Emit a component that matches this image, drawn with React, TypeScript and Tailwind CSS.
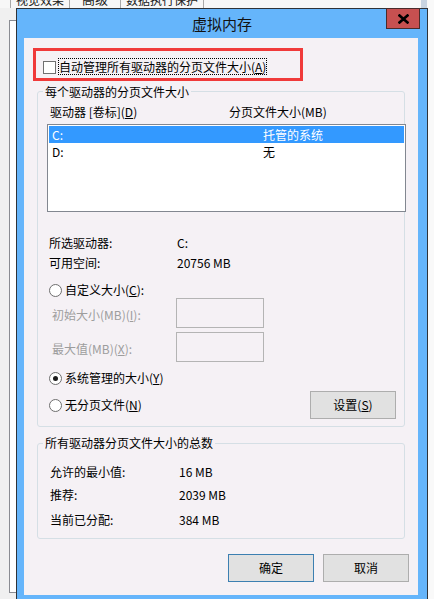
import React from "react";

function Radio({ checked }: { checked?: boolean }) {
  return (
    <span className="w-[13px] h-[13px] rounded-full border border-[#6e6e6e] bg-white flex items-center justify-center shrink-0">
      {checked && <span className="w-[5px] h-[5px] rounded-full bg-[#1c1c1c]" />}
    </span>
  );
}

function Btn({ children, primary }: { children: React.ReactNode; primary?: boolean }) {
  return (
    <div
      className={
        "w-[86px] h-[28px] flex items-center justify-center bg-[#e1e1e1] border " +
        (primary ? "border-[#3c7fb1]" : "border-[#adadad]")
      }
    >
      {children}
    </div>
  );
}

export default function App() {
  return (
    <div className="relative w-[434px] h-[599px] overflow-hidden bg-[#f0f0f0] text-[12px] leading-[16px] text-black font-['Noto_Sans_CJK_SC','Noto_Sans',sans-serif]">
      {/* backdrop: underlying window's tab strip */}
      <div className="absolute left-0 top-0 w-[434px] h-[8px] overflow-hidden bg-[#f7f7f7] flex">
        <div className="ml-[10px] flex h-[8px] border-l border-[#a9a9a9] text-[#222]">
          <div className="w-[59px] border-r border-[#a9a9a9] flex justify-center">
            <span className="mt-[-8px] leading-[16px]">视觉效果</span>
          </div>
          <div className="w-[51px] border-r border-[#a9a9a9] flex justify-center">
            <span className="mt-[-9px] leading-[16px] text-[13px]">高级</span>
          </div>
          <div className="w-[83px] border-r border-[#a9a9a9] flex justify-center">
            <span className="mt-[-8px] leading-[16px]">数据执行保护</span>
          </div>
        </div>
      </div>
      <div className="absolute left-[421px] top-0 w-[6px] h-[10px] bg-[#c8d4e2]" />
      <div className="absolute left-[428px] top-0 w-[6px] h-[599px] bg-[#f9f9f9]" />
      <div className="absolute left-[9px] top-[20px] w-[12px] h-[573px] border border-[#8a8c92] bg-white" />

      {/* dialog window */}
      <div className="absolute left-[16px] top-[8px] w-[412px] h-[595px] border border-[#2f3338] bg-[#65b5fb] flex flex-col">
        <div className="relative h-[29px] flex items-center justify-center shrink-0">
          <span className="text-[15px] leading-[20px] mt-[1px] text-[#111]">虚拟内存</span>
          <div className="absolute right-[7px] top-[-1px] w-[34px] h-[21px] bg-[#c75050] border border-[#4a2b2b] flex items-center justify-center">
            <svg width="11" height="10" viewBox="0 0 11 10">
              <path d="M1.5 1.5 L9.5 8.5 M9.5 1.5 L1.5 8.5" stroke="#000" strokeWidth="2.6" strokeLinecap="square" />
            </svg>
          </div>
        </div>

        <div className="ml-[7px] mr-[9px] h-[557px] bg-[#f5f1f5] flex flex-col shrink-0">
          {/* highlighted checkbox */}
          <div className="ml-[9px] mt-[10px] w-[270px] h-[33px] border-[3px] border-[#f03a3a] flex items-start pl-[7px] pt-[7px] shrink-0">
            <span className="mt-[3px] w-[13px] h-[13px] border border-[#707070] bg-white shrink-0" />
            <span className="ml-[2px] h-[17px] border border-dotted border-black leading-[15px] whitespace-nowrap">
              自动管理所有驱动器的分页文件大小(<u>A</u>)
            </span>
          </div>

          {/* group 1 */}
          <div className="relative ml-[13px] mt-[10px] w-[368px] h-[336px] border border-[#d5dfe5] rounded-[3px] shrink-0">
            <span className="absolute left-[5px] top-[-8px] px-[2px] bg-[#f5f1f5] whitespace-nowrap">每个驱动器的分页文件大小</span>

            <div className="pt-[12px] pl-[12px] flex whitespace-nowrap">
              <span className="w-[179px]">驱动器 [卷标](<u>D</u>)</span>
              <span>分页文件大小(MB)</span>
            </div>

            <div className="mt-[4px] ml-[9px] w-[359px] h-[88px] border border-[#828790] bg-white p-[1px]">
              <div className="h-[17px] flex items-center bg-[#3399ff] text-white pl-[3px]">
                <span className="w-[211px]">C:</span>
                <span>托管的系统</span>
              </div>
              <div className="h-[17px] flex items-center pl-[3px]">
                <span className="w-[211px]">D:</span>
                <span>无</span>
              </div>
            </div>

            <div className="mt-[21px] pl-[11px]">
              <div className="h-[20px] flex items-center">
                <span className="w-[128px]">所选驱动器:</span>
                <span>C:</span>
              </div>
              <div className="h-[20px] flex items-center">
                <span className="w-[128px]">可用空间:</span>
                <span>20756 MB</span>
              </div>
            </div>

            <div className="mt-[7px] h-[20px] pl-[11px] flex items-center gap-[3px]">
              <Radio />
              <span>自定义大小(<u>C</u>):</span>
            </div>

            <div className="mt-[-2px] h-[30px] pl-[14px] flex items-center text-[#9d9d9d]">
              <span className="w-[124px] mt-[4px]">初始大小(MB)(<u>I</u>):</span>
              <span className="w-[88px] h-[30px] border border-[#b4b4b4]" />
            </div>
            <div className="mt-[4px] h-[30px] pl-[14px] flex items-center text-[#9d9d9d]">
              <span className="w-[124px] mt-[4px]">最大值(MB)(<u>X</u>):</span>
              <span className="w-[88px] h-[30px] border border-[#b4b4b4]" />
            </div>

            <div className="mt-[6px] h-[20px] pl-[11px] flex items-center gap-[3px]">
              <Radio checked />
              <span>系统管理的大小(<u>Y</u>)</span>
            </div>

            <div className="mt-[3px] h-[28px] pl-[11px] flex items-center">
              <Radio />
              <span className="ml-[3px]">无分页文件(<u>N</u>)</span>
              <div className="ml-auto mr-[8px]">
                <Btn>
                  设置(<u>S</u>)
                </Btn>
              </div>
            </div>
          </div>

          {/* group 2 */}
          <div className="relative ml-[13px] mt-[16px] w-[368px] h-[96px] border border-[#d5dfe5] rounded-[3px] shrink-0">
            <span className="absolute left-[5px] top-[-9px] px-[2px] bg-[#f5f1f5] whitespace-nowrap">所有驱动器分页文件大小的总数</span>
            <div className="pt-[18px] pl-[12px]">
              <div className="h-[20px] flex items-center">
                <span className="w-[129px]">允许的最小值:</span>
                <span>16 MB</span>
              </div>
              <div className="mt-[3px] h-[20px] flex items-center">
                <span className="w-[129px]">推荐:</span>
                <span>2039 MB</span>
              </div>
              <div className="mt-[5px] h-[20px] flex items-center">
                <span className="w-[129px]">当前已分配:</span>
                <span>384 MB</span>
              </div>
            </div>
          </div>

          <div className="mt-[15px] flex justify-end gap-[9px] pr-[9px] shrink-0">
            <Btn primary>确定</Btn>
            <Btn>取消</Btn>
          </div>
        </div>
      </div>
    </div>
  );
}
